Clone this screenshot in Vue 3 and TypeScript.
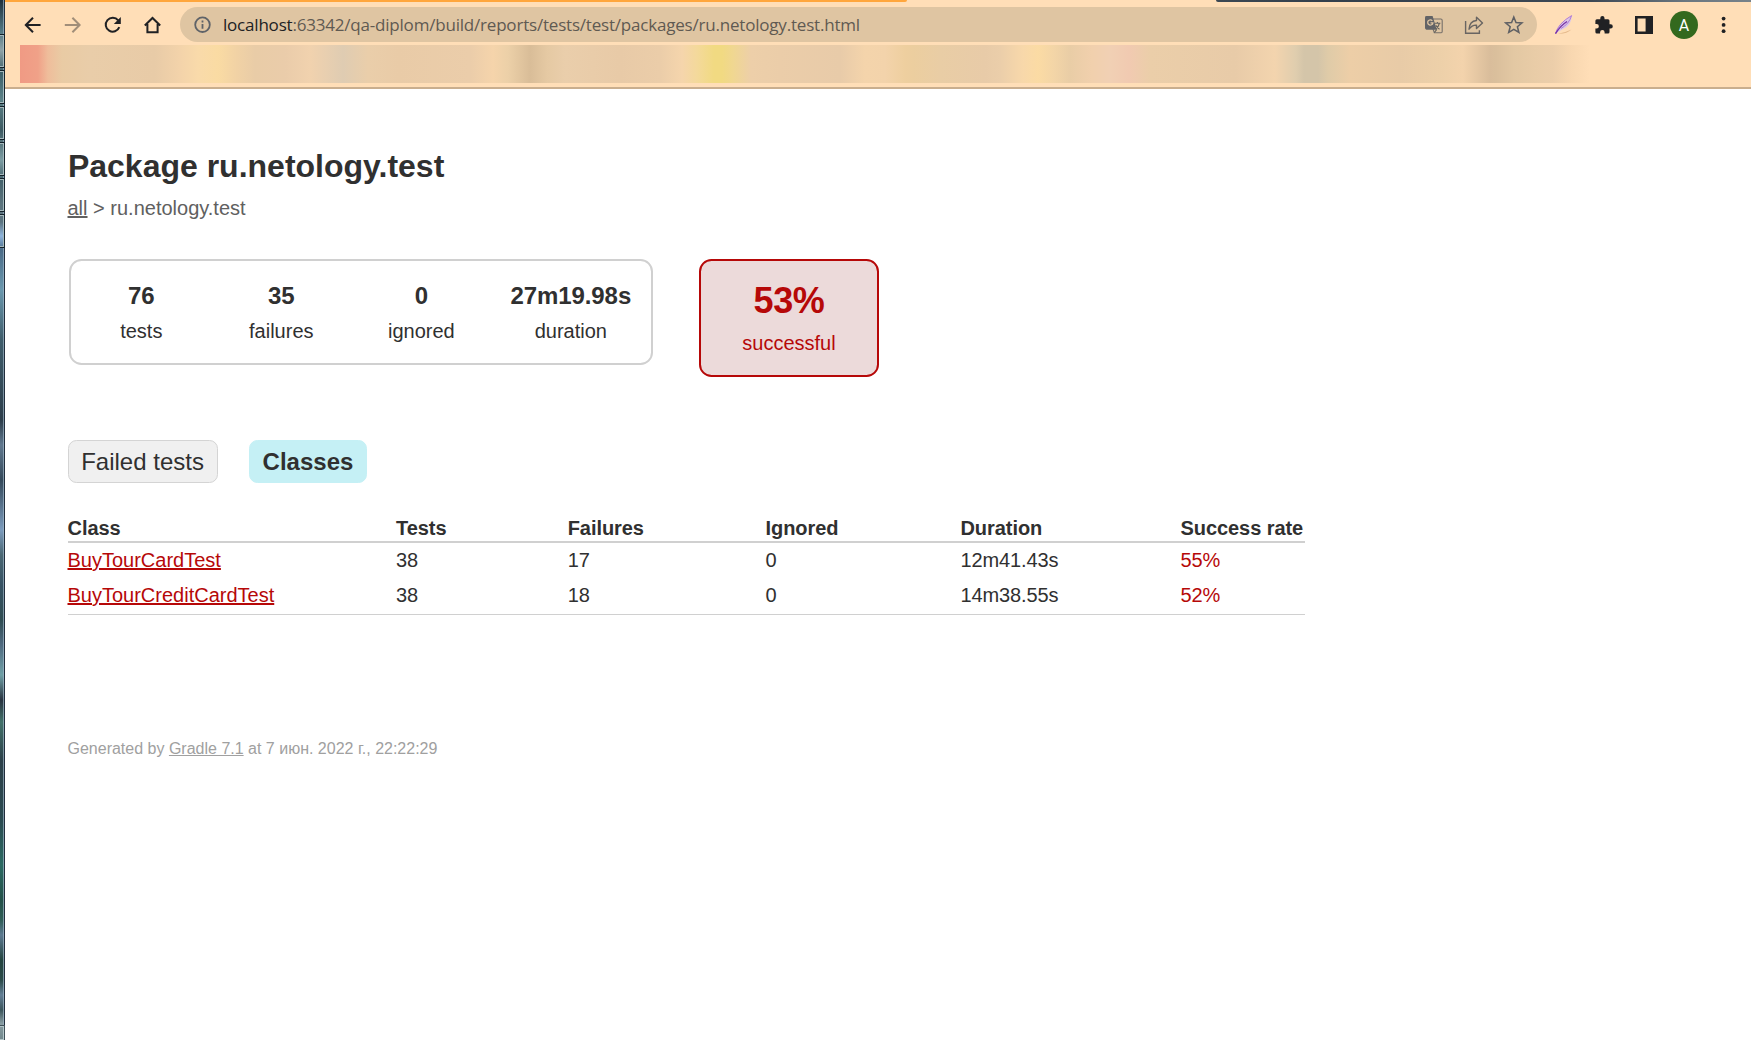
<script setup lang="ts">
interface Stat { value: string; label: string }
interface TestClass { name: string; tests: number; failures: number; ignored: number; duration: string; rate: string }

const stats: Stat[] = [
  { value: '76', label: 'tests' },
  { value: '35', label: 'failures' },
  { value: '0', label: 'ignored' },
  { value: '27m19.98s', label: 'duration' },
]
const classes: TestClass[] = [
  { name: 'BuyTourCardTest', tests: 38, failures: 17, ignored: 0, duration: '12m41.43s', rate: '55%' },
  { name: 'BuyTourCreditCardTest', tests: 38, failures: 18, ignored: 0, duration: '14m38.55s', rate: '52%' },
]
</script>

<template>
  <div class="screen">
    <div class="desktop">
      <i v-for="n in 7" :key="n" class="tile"></i>
      <i class="tile last"></i>
    </div>
    <div class="browser">
      <div class="tabstrip"><span class="accent"></span><span class="backdrop"></span></div>
      <div class="toolbar">
        <svg class="nav" viewBox="0 0 20 20"><path d="M17.600 10H3M10 2.800 2.800 10l7.200 7.200" /></svg>
        <svg class="nav dim" viewBox="0 0 20 20"><path d="M1.800 10H16.400M9.400 2.800l7.200 7.200-7.200 7.200" /></svg>
        <svg class="nav" viewBox="0 0 20 20"><path d="M16.300 12.200A7 7 0 1 1 15.200 5.300" /><path class="solid" d="M17.800 2v7h-7z" /></svg>
        <svg class="nav" viewBox="0 0 20 20"><path d="M1.800 10.500 9.500 3l7.700 7.500M4.400 9v8.300h10.200V9" /></svg>
        <div class="omnibox">
          <svg class="info" viewBox="0 0 20 20"><circle cx="9.500" cy="9.700" r="7.300" /><path d="M9.500 9v4.800M9.500 5.400v2" /></svg>
          <span class="url"><b>localhost</b>:63342/qa-diplom/build/reports/tests/test/packages/ru.netology.test.html</span>
          <svg class="act" viewBox="0 0 20 20">
            <path d="M8 4h8.800q1.400 0 1.400 1.400v11q0 1.400-1.400 1.400H10.300L6 5z" fill="none" stroke="#77706a" stroke-width="1.100" />
            <path d="M2.400 1h6.200l4.200 13.700H2.400Q1 14.400 1 13V2.400Q1 1 2.400 1z" fill="#626366" />
            <path d="M8.300 5.800a2.600 2.600 0 1 0 .6 2H6.500" fill="none" stroke="#dfc5a2" stroke-width="1.300" />
            <path d="M10.600 8.300h5.800M13.400 7v1.300M15.300 8.500q-.8 3.300-3.300 5.300M11.800 10.300q1.300 2.400 3.700 3.900M10.300 17.600l2.500-3.200" fill="none" stroke="#66645f" stroke-width="1.100" />
          </svg>
          <svg class="act" viewBox="0 0 20 20"><path d="M1.600 6v12.200h13.800v-3" fill="none" stroke="#696562" stroke-width="1.400" /><path d="M5 14.200Q5.500 6.200 12.500 5.500V2.200l6 5.800-6 5.500v-3.400Q8 9.800 5 14.200z" fill="none" stroke="#696562" stroke-width="1.400" stroke-linejoin="round" /></svg>
          <svg class="act" viewBox="0 0 20 20"><path d="m9.800 2 2.200 5.500 6 .4-4.600 3.900 1.500 5.700-5.100-3.100-5.100 3.100 1.500-5.700-4.600-3.900 6-.4z" fill="none" stroke="#5f6064" stroke-width="1.500" /></svg>
        </div>
        <svg class="ext" viewBox="0 0 20 20">
          <path d="M4 18.700q6-.7 13.500-4.200Q13 19 4 18.700z" fill="#e5b98c" />
          <path d="M2 18Q3 9 17.600.8 18 11 8 14.700z" fill="#dcc8e6" />
          <path d="M1.500 18.600Q4 8.500 17.600.6 15 9 7 13.500" fill="none" stroke="#b07bd6" stroke-width="1" />
          <path d="M1.500 18.700Q6 11 13 6.500" fill="none" stroke="#7632a8" stroke-width="1.400" />
        </svg>
        <svg class="ext" viewBox="0 0 20 20"><path fill="#202124" d="M16.700 9.300h-1.200V5.800q0-1.500-1.500-1.500h-3.500V3a2 2 0 0 0-4.200 0v1.300H2.900q-1.500 0-1.500 1.500v3.300h1.200a2.250 2.250 0 0 1 0 4.500H1.400V17q0 1.500 1.500 1.500h3.200v-1.200a2.250 2.250 0 0 1 4.500 0v1.200H14q1.500 0 1.500-1.500v-3.500h1.200a2.100 2.100 0 0 0 0-4.200z" /></svg>
        <svg class="ext" viewBox="0 0 20 20"><path fill="#202124" fill-rule="evenodd" d="M1 1h18v18H1zM3.600 3.600v12.800h8V3.600z" /></svg>
        <span class="avatar">A</span>
        <svg class="ext menu" viewBox="0 0 20 20"><g fill="#202124"><circle cx="9.600" cy="3.600" r="1.900" /><circle cx="9.600" cy="9.900" r="1.900" /><circle cx="9.600" cy="16.200" r="1.900" /></g></svg>
      </div>
      <div class="bookmarks"></div>
      <main class="content">
        <h1>Package ru.netology.test</h1>
        <div class="breadcrumbs"><a>all</a> &gt; ru.netology.test</div>
        <div class="summary">
          <div class="group">
            <div v-for="s in stats" :key="s.label" class="box">
              <div class="counter">{{ s.value }}</div>
              <div>{{ s.label }}</div>
            </div>
          </div>
          <div class="success">
            <div class="percent">53%</div>
            <div>successful</div>
          </div>
        </div>
        <div class="tabs"><a class="tab">Failed tests</a><a class="tab selected">Classes</a></div>
        <table>
          <colgroup><col class="c1" /><col class="c2" /><col class="c3" /><col class="c4" /><col class="c5" /><col /></colgroup>
          <thead>
            <tr><th>Class</th><th>Tests</th><th>Failures</th><th>Ignored</th><th>Duration</th><th>Success rate</th></tr>
          </thead>
          <tbody>
            <tr v-for="c in classes" :key="c.name">
              <td class="failed"><a>{{ c.name }}</a></td>
              <td>{{ c.tests }}</td><td>{{ c.failures }}</td><td>{{ c.ignored }}</td><td class="num">{{ c.duration }}</td>
              <td class="failed num">{{ c.rate }}</td>
            </tr>
          </tbody>
        </table>
        <footer>Generated by <a>Gradle 7.1</a> at 7 июн. 2022 г., 22:22:29</footer>
      </main>
    </div>
  </div>
</template>

<style>
body { margin: 0; overflow: hidden; background: #fff; }
</style>

<style scoped>
.screen { display: flex; width: 1751px; height: 1040px; overflow: hidden; font: 20px/23px "Liberation Sans", Arial, sans-serif; color: #303030; }
.desktop {
  box-sizing: border-box; width: 5px; flex: none; display: flex; flex-direction: column;
  border-right: 1px solid #202d3c;
  background:
    linear-gradient(90deg, transparent 3px, #9fb6c7aa 3px),
    linear-gradient(#20303d 0, #4f7580 30px, #8fa3a8 50px, #3d6069 72px, #5c8288 100px, #3d5a62 130px, #7c9da3 160px, #44626b 180px, #5c747e 205px, #5c7480 222px, #8eb4dc 236px, #4b6c88 250px, #6a98ae 290px, #3f5d6b 340px, #2c3d4a 420px, #60788f 445px, #34495a 480px, #7b9bbd 530px, #4a6773 555px, #365263 585px, #2f4c52 620px, #4f6a80 645px, #6fa0a6 675px, #28333f 700px, #427169 722px, #2c4049 760px, #2a4a50 820px, #2b6a62 865px, #235048 900px, #2f5d56 920px, #5d7a91 935px, #23443f 960px, #2a4a48 980px, #637f96 995px, #3b555b 1010px, #8a9ea3 1024px, #71878c 1040px);
}
.tile { box-sizing: border-box; height: 32px; flex: none; margin-bottom: 4px; border: 1px solid #a5b9bd; border-left: 0; outline: 1px solid #14222b; }
.tile:first-child { height: 34px; margin-bottom: 1px; border: 0; outline: 0; }
.tile.last { height: 14px; margin: auto 0 0; border-color: #b3c6c9; outline-color: #405058; }
.browser { width: 1746px; flex: none; display: flex; flex-direction: column; }
.tabstrip { height: 2px; flex: none; background: #ffdeb7; display: flex; justify-content: space-between; }
.accent { width: 902px; background: #ffa63c; border-radius: 0 0 2px 0; }
.backdrop { width: 535px; background: linear-gradient(90deg, #3c4853, #34404c 20%, #3d4854 70%, #6b7780 88%, #77828a); border-radius: 0 0 0 2px; }
.toolbar { height: 43px; flex: none; box-sizing: border-box; padding: 5px 0 3px 18px; background: #ffdeb7; display: flex; align-items: center; }
.nav { width: 20px; height: 20px; margin-right: 20px; flex: none; fill: none; stroke: #202124; stroke-width: 2; }
.nav .solid { fill: #202124; stroke: none; }
.nav.dim { stroke: #a18e79; }
.omnibox { box-sizing: border-box; width: 1357px; height: 35px; margin-left: -3px; border-radius: 18px; background: #dfc5a2; display: flex; align-items: center; flex: none; padding: 0 13px; }
.info { width: 20px; height: 20px; fill: none; stroke: #5f6368; stroke-width: 1.8; }
.url { flex: 1; margin-left: 10px; font: 17px/24px "Open Sans", "Noto Sans", sans-serif; letter-spacing: -.2px; color: #5f5a52; white-space: nowrap; }
.url b { font-weight: 400; color: #202124; }
.act { width: 20px; height: 20px; flex: none; margin-left: 20px; }
.ext { width: 20px; height: 20px; flex: none; margin-left: 20px; }
.omnibox + .ext { margin-left: 17px; }
.avatar { width: 28px; height: 28px; margin-left: 16px; border-radius: 50%; background: #33691e; color: #fff; font: 16px/29px Roboto, sans-serif; text-align: center; flex: none; }
.menu { margin-left: 16px; }
.bookmarks {
  height: 44px; flex: none; box-sizing: border-box; padding: 0 0 4px 15px;
  border-bottom: 2px solid #c9ae8e; background: #ffdeb7;
}
.bookmarks::before {
  content: ""; display: block; height: 38px; width: 1580px;
  background: linear-gradient(90deg, #f09a84 0, #f0a188 18px, #efbd9b 28px, #e9cba4 42px, #e9cda9 70px, #e8cba7 135px, #f3d3aa 160px, #f9daaa 178px, #fadba3 198px, #f1d2a5 217px, #e9cca7 235px, #eaccaa 265px, #f1d2ae 290px, #dfccb2 323px, #eaceaa 348px, #e9cba7 378px, #ebcdaa 450px, #f5d4ab 473px, #ecd0a8 488px, #d9bd98 510px, #e5c9a3 527px, #eaceab 545px, #e8caa7 600px, #ebcda9 640px, #f5d5ac 662px, #f4d99b 677px, #f1da82 694px, #f1da82 702px, #f0d791 713px, #edcfa9 731px, #ebcda9 760px, #e8cba9 820px, #f4d4ab 845px, #f3d3ab 865px, #eecf9f 885px, #ecce9f 893px, #e9cda5 920px, #e8cba8 965px, #ebceaa 980px, #f8d8aa 1003px, #fbdba4 1018px, #f3d5a7 1034px, #e9cda6 1050px, #f1d0ad 1072px, #f1d0b4 1090px, #f1cab1 1109px, #ebcea9 1130px, #e8cba8 1215px, #f3d4ae 1255px, #dfcdae 1276px, #d4c5a9 1284px, #d4c5a9 1298px, #dfcba8 1308px, #edcea7 1330px, #e8cba7 1380px, #edd0a9 1420px, #f3d3ac 1443px, #d9bd9b 1470px, #dabf9c 1476px, #e3c8a3 1494px, #e9cca7 1515px, #ecceaa 1533px, #f8d7b0 1551px, #ffdeb7 1570px);
}
.content { padding: 58.5px 62.5px 0; background: #fff; }
h1 { margin: 0 0 12.5px .4px; font-size: 32px; line-height: 37px; }
.breadcrumbs { color: #606060; }
a { color: inherit; text-decoration: underline; }
.breadcrumbs, footer { white-space: nowrap; }
.summary { display: flex; align-items: flex-start; margin: 39px 0 0 1.8px; text-align: center; }
.group { display: flex; border: 2px solid #d0d0d0; border-radius: 12.5px; box-sizing: border-box; width: 583.7px; height: 106px; padding-top: 21px; }
.box { width: 140px; flex: none; }
.box:last-child { width: 159px; }
.counter { font-size: 24px; line-height: 27px; font-weight: 700; margin-bottom: 11px; letter-spacing: -.08px; }
.success { box-sizing: border-box; width: 180px; height: 118px; margin-left: 46px; padding-top: 19px; border: 2px solid #b60808; border-radius: 12.5px; background: #ecdada; color: #b60808; }
.percent { font-size: 36px; line-height: 41px; font-weight: 700; margin-bottom: 11px; letter-spacing: -.3px; }
.tabs { display: flex; gap: 31px; margin-top: 63px; }
.tab { box-sizing: border-box; height: 43px; padding: 7px 12.7px; border: 1px solid #d4d4d4; border-radius: 8.5px; background: #f0f0f0; font-size: 24px; line-height: 27px; text-decoration: none; }
.tab.selected { padding: 7px 12.4px 7px 13px; background: #c5f0f5; border-color: #c5f0f5; font-weight: 700; }
table { width: 1237.5px; margin-top: 34px; table-layout: fixed; border-collapse: separate; border-spacing: 0; text-align: left; }
.c1 { width: 328.5px; } .c2 { width: 171.7px; } .c3 { width: 197.8px; } .c4 { width: 195px; } .c5 { width: 220px; }
th { padding: 0 0 1px; border-bottom: 2px solid #d0d0d0; height: 23px; white-space: nowrap; letter-spacing: -.06px; }
td { padding: 6px 0; height: 23px; }
td.num { letter-spacing: -.12px; }
tbody tr:last-child td { border-bottom: 1px solid #d0d0d0; padding-bottom: 7px; }
.failed { color: #b60808; }
footer { margin-top: 125px; font-size: 16px; line-height: 18px; color: #a0a0a0; }
</style>
